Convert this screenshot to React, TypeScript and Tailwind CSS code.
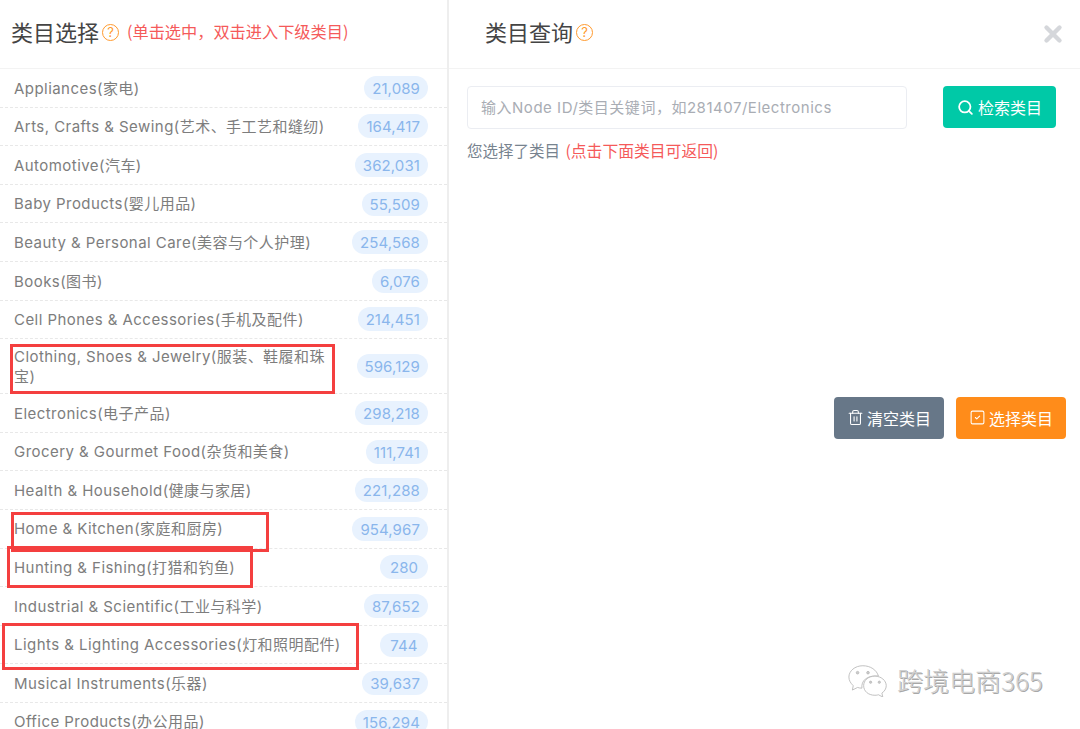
import React from 'react';
import { Search, Trash2, SquareCheck, X } from 'lucide-react';

const categories = [
    ['Appliances(家电)', '21,089'],
    ['Arts, Crafts & Sewing(艺术、手工艺和缝纫)', '164,417'],
    ['Automotive(汽车)', '362,031'],
    ['Baby Products(婴儿用品)', '55,509'],
    ['Beauty & Personal Care(美容与个人护理)', '254,568'],
    ['Books(图书)', '6,076'],
    ['Cell Phones & Accessories(手机及配件)', '214,451'],
    ['Clothing, Shoes & Jewelry(服装、鞋履和珠宝)', '596,129'],
    ['Electronics(电子产品)', '298,218'],
    ['Grocery & Gourmet Food(杂货和美食)', '111,741'],
    ['Health & Household(健康与家居)', '221,288'],
    ['Home & Kitchen(家庭和厨房)', '954,967'],
    ['Hunting & Fishing(打猎和钓鱼)', '280'],
    ['Industrial & Scientific(工业与科学)', '87,652'],
    ['Lights & Lighting Accessories(灯和照明配件)', '744'],
    ['Musical Instruments(乐器)', '39,637'],
    ['Office Products(办公用品)', '156,294'],
];

// annotation boxes drawn over the screenshot
const marks = [
    'left-[10px] top-[344px] w-[325px] h-[50px]',
    'left-[11px] top-[512px] w-[258px] h-[40px]',
    'left-[7px] top-[546px] w-[246px] h-[42px]',
    'left-[2px] top-[623px] w-[357px] h-[47px]',
];

function Help() {
    return (
        <span className="w-[17px] h-[17px] inline-flex items-center justify-center rounded-full border-[1.5px] border-[#ff9a2e] text-[#ff9a2e] text-[13px] leading-none">?</span>
    );
}

function WeChat() {
    return (
        <svg width="42" height="33" viewBox="0 0 46 38" fill="none" stroke="#b9b9b9" strokeWidth="1">
            <path d="M17 2C8 2 1 8 1 15c0 4 2 7 5 10l-1 5 6-3c2 .6 3 .8 5 .8-1-8 5-15 19-14C33 7 26 2 17 2z" fill="#fff" />
            <path d="M31 14c-8 0-13 5-13 11s5 11 13 11c2 0 3-.3 4-.6l5 2.600-1-4.500c3-2 5-5 5-8.500 0-6-6-11-13-11z" fill="#fff" />
            <circle cx="11" cy="10" r="1.500" fill="#ccc" />
            <circle cx="23" cy="10" r="1.500" fill="#ccc" />
            <circle cx="26" cy="21" r="1.300" fill="#ccc" />
            <circle cx="36" cy="21" r="1.300" fill="#ccc" />
        </svg>
    );
}

export default function App() {
    return (
        <div className="relative w-[1080px] h-[729px] overflow-hidden bg-white flex font-['Inter','Noto_Sans_CJK_SC',sans-serif]">
            <div className="w-[449px] shrink-0 border-r-2 border-[#eeeeee]">
                <div className="h-[69px] border-b border-[#f3f3f3] flex items-center pl-[11px] pb-[6px]">
                    <h2 className="text-[22px] text-[#444444] font-['Noto_Sans_CJK_SC',sans-serif] leading-none">类目选择</h2>
                    <span className="ml-[3px]"><Help /></span>
                    <span className="ml-[8px] text-[16.200px] text-[#f55a5a] font-['Noto_Sans_CJK_SC',sans-serif]">(单击选中，双击进入下级类目)</span>
                </div>
                <ul>
                    {categories.map(([name, count], i) => (
                        <li key={name} className={`${i === 7 ? 'h-[55px]' : 'h-[38.600px]'} flex items-center justify-between pl-[14px] pr-[19px] border-b border-dashed border-[#e8e8e8]`}>
                            <span className={`${i === 7 ? 'w-[318px]' : ''} pt-[1px] text-[15px] tracking-[0.45px] leading-[19.500px] text-[#7d7d7d]`}>{name}</span>
                            <span className="h-[24px] min-w-[48px] px-[8px] text-center rounded-full bg-[#e8f2fe] text-[#8ab6ec] text-[15px] tracking-[0.1px] leading-[26px]">{count}</span>
                        </li>
                    ))}
                </ul>
            </div>

            <div className="flex-1 min-w-0">
                <div className="h-[69px] border-b border-[#f3f3f3] flex items-center pl-[36px] pr-[14px] pb-[6px]">
                    <h2 className="text-[22px] text-[#444444] font-['Noto_Sans_CJK_SC',sans-serif] leading-none">类目查询</h2>
                    <span className="ml-[3px]"><Help /></span>
                    <X className="ml-auto mt-[5px] text-[#d5d7db]" size={26} strokeWidth={4} />
                </div>
                <div className="pl-[18px] pr-[24px] pt-[17px]">
                    <div className="flex justify-between">
                        <div className="w-[440px] h-[43px] border border-[#ebedf2] rounded-[4px] flex items-center pl-[13px] pt-[2px] text-[15px] tracking-[0.52px] text-[#a9adb4]">
                            输入Node ID/类目关键词，如281407/Electronics
                        </div>
                        <button className="w-[113px] h-[42px] bg-[#00c9a7] rounded-[4px] text-white text-[16px] flex items-center justify-center gap-[4px] font-['Noto_Sans_CJK_SC',sans-serif]">
                            <Search size={17} strokeWidth={2.500} />
                            检索类目
                        </button>
                    </div>
                    <p className="mt-[10px] text-[15.500px] text-[#77838f] font-['Noto_Sans_CJK_SC',sans-serif] leading-[22px]">
                        您选择了类目 <span className="ml-[2px] text-[15.800px] text-[#f55a5a]">(点击下面类目可返回)</span>
                    </p>
                </div>
                <div className="mt-[235px] pr-[14px] flex justify-end gap-[12px] font-['Noto_Sans_CJK_SC',sans-serif]">
                    <button className="w-[110px] h-[42px] bg-[#677788] rounded-[4px] text-white text-[16px] leading-none pb-[1px] flex items-center justify-center gap-[3px]">
                        <Trash2 size={17} strokeWidth={1.500} />
                        清空类目
                    </button>
                    <button className="w-[110px] h-[42px] bg-[#ff8c1a] rounded-[4px] text-white text-[16px] leading-none pb-[1px] flex items-center justify-center gap-[3px]">
                        <SquareCheck size={17} strokeWidth={1.500} />
                        选择类目
                    </button>
                </div>
            </div>

            {marks.map((m) => (
                <div key={m} className={`absolute ${m} border-[3px] border-[#f43f3f]`} />
            ))}

            <div className="absolute left-[847px] top-[664px] flex items-center gap-[8px]">
                <WeChat />
                <span className="text-[26px] leading-none pb-[2px] text-[#d0d0d0] font-['Noto_Sans_CJK_SC',sans-serif] font-light [text-shadow:1px_1px_0_#a8a8a8]">跨境电商365</span>
            </div>
        </div>
    );
}
